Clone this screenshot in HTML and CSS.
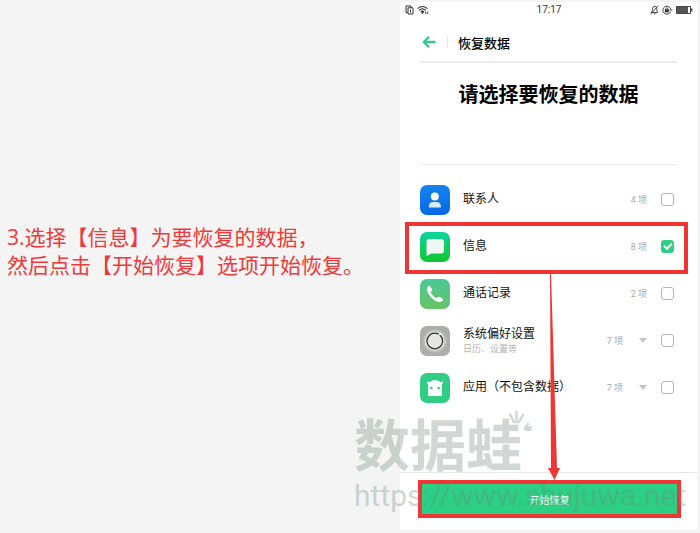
FILE: index.html
```
<!DOCTYPE html>
<html lang="zh-CN">
<head>
    <meta charset="UTF-8">
    <meta name="viewport" content="width=device-width, initial-scale=1.0">
    <title>恢复数据</title>
    <link rel="stylesheet" href="styles.css">
</head>
<body>
    <div class="guide">
        <p class="step">3.选择【信息】为要恢复的数据，<br>然后点击【开始恢复】选项开始恢复。</p>

        <main class="phone">
            <div class="status-bar">
                <div class="status-icons">
                    <svg width="9" height="10" viewBox="0 0 9 10" fill="none" stroke="#333">
                        <path d="M2.5 7.5H1V1h5v1.500M3 2.800h5V9H3z"/>
                        <path d="M5.500 4.500v3"/>
                    </svg>
                    <svg width="13" height="10" viewBox="0 0 13 10" fill="none" stroke="#333">
                        <path d="M.6 3.600Q5.500-.6 10.400 3.600M2.200 5.300Q5.500 2.500 8.800 5.300M3.800 7Q5.500 5.500 7.200 7" stroke-width="1.200"/>
                        <circle cx="5.500" cy="8" r=".9" fill="#333" stroke="none"/>
                        <path d="M8.700 6.500v2.500M10.700 6.500v2.500" stroke-width=".9"/>
                    </svg>
                </div>
                <span class="time">17:17</span>
                <div class="status-icons status-right">
                    <svg width="9" height="10" viewBox="0 0 9 10" fill="none" stroke="#333" stroke-width=".9">
                        <path d="M1.200 7.500h6.500L6.800 5.600V3.200Q6.500 1.300 4.700 1.300T2.600 3.200v2.400zM3.600 8.900h2M8.200.6.600 9.200"/>
                    </svg>
                    <svg width="11" height="10" viewBox="0 0 11 10" fill="none" stroke="#333" stroke-width=".9">
                        <path d="M8.600 6.500A4 4 0 1 1 8.800 4.500M7.500 5h3M3.700 4.500V3.600q1.200-1.800 2.300 0v.9"/>
                        <path d="M2.900 4.300h4v3h-4z" fill="#333" stroke="none"/>
                    </svg>
                    <svg width="17" height="8" viewBox="0 0 17 8">
                        <path d="M.5.500h14v7H.5z" fill="#fff" stroke="#444"/>
                        <path d="M1 1h11v6H1z" fill="#555"/>
                        <path d="M15 2.500h1.500v3H15z" fill="#555"/>
                    </svg>
                </div>
            </div>

            <header class="header">
                <button class="back" type="button" aria-label="返回">
                    <svg width="14" height="12" viewBox="0 0 14 12" fill="none" stroke="#36c68a" stroke-width="2.400" stroke-linecap="round" stroke-linejoin="round">
                        <path d="M12.500 6H2M6.300 1.500 1.700 6l4.600 4.500"/>
                    </svg>
                </button>
                <h1>恢复数据</h1>
            </header>

            <h2 class="title">请选择要恢复的数据</h2>

            <div class="list">
                <label class="row">
                    <svg class="app-icon" viewBox="0 0 30 30">
                        <defs>
                            <linearGradient id="blue" x2="0" y2="1"><stop stop-color="#1684ee"/><stop offset="1" stop-color="#0568e4"/></linearGradient>
                        </defs>
                        <rect width="30" height="30" rx="7" fill="url(#blue)"/>
                        <circle cx="14.800" cy="11.500" r="4" fill="#fff"/>
                        <path d="M8.800 22.500v-1q0-4.500 4.500-4.500h3q4.500 0 4.500 4.500v1z" fill="#dcebfb"/>
                    </svg>
                    <span class="name">联系人</span>
                    <span class="count">4 项</span>
                    <input type="checkbox">
                </label>
                <label class="row highlight">
                    <svg class="app-icon" viewBox="0 0 30 30">
                        <defs>
                            <linearGradient id="green" x2="0" y2="1"><stop stop-color="#0bd5a0"/><stop offset="1" stop-color="#0fc52c"/></linearGradient>
                        </defs>
                        <rect width="30" height="30" rx="7" fill="url(#green)"/>
                        <path d="M9 7h12q3 0 3 3v8.500q0 3-3 3H11.500L6.500 24V10q0-3 2.500-3z" fill="#f2f6f3"/>
                    </svg>
                    <span class="name">信息</span>
                    <span class="count">8 项</span>
                    <input type="checkbox" checked>
                </label>
                <label class="row">
                    <svg class="app-icon" viewBox="0 0 30 30">
                        <defs>
                            <linearGradient id="call" x2="0" y2="1"><stop stop-color="#4bc998"/><stop offset="1" stop-color="#67c465"/></linearGradient>
                        </defs>
                        <rect width="30" height="30" rx="7" fill="url(#call)"/>
                        <path d="M7 8.500Q8 6.500 9.800 6.800 12 9 12 11.300L10.600 13.300Q12.500 17.400 16.600 19.200L18.500 17.700Q21 18 23 20.200 23 22 21 23 16.500 23.700 11.300 18.500 6.300 13.300 7 8.500z" fill="#fff"/>
                    </svg>
                    <span class="name">通话记录</span>
                    <span class="count">2 项</span>
                    <input type="checkbox">
                </label>
                <label class="row">
                    <svg class="app-icon" viewBox="0 0 30 30">
                        <rect width="30" height="30" rx="7" fill="#acaeac"/>
                        <circle cx="14.800" cy="15" r="10.800" fill="none" stroke="#d4d5d4" stroke-width="1.500" stroke-dasharray="1 1"/>
                        <circle cx="14.800" cy="15" r="10" fill="#dededd"/>
                        <circle cx="14.800" cy="15" r="7.800" fill="#e6e6e5" stroke="#333" stroke-width="1.300"/>
                        <path d="M17.500 10 20 6.500l2 2z" fill="#fff"/>
                    </svg>
                    <span class="name">系统偏好设置<small>日历、设置等</small></span>
                    <span class="count">7 项</span>
                    <span class="arrow-down"></span>
                    <input type="checkbox">
                </label>
                <label class="row">
                    <svg class="app-icon" viewBox="0 0 30 30">
                        <rect width="30" height="30" rx="7" fill="#2fce84"/>
                        <path d="M7.200 7.500Q7.500 9.500 9.600 9 14.800 5 20.400 9 22.500 9.500 22.800 7.500 23.500 10.500 21.800 11.500V23H8.200V11.500Q6.500 10.500 7.200 7.500z" fill="#fff"/>
                        <circle cx="11.300" cy="15" r="1.300" fill="#2fce84"/>
                        <circle cx="18.700" cy="15" r="1.300" fill="#2fce84"/>
                    </svg>
                    <span class="name">应用（不包含数据）</span>
                    <span class="count">7 项</span>
                    <span class="arrow-down"></span>
                    <input type="checkbox">
                </label>
            </div>

            <footer class="footer">
                <button class="start" type="button">开始恢复</button>
            </footer>

            <div class="watermark">
                <span class="brand">数据蛙</span>
                <span class="site">https://www.shujuwa.net</span>
                <svg class="crown" width="26" height="24" viewBox="0 0 26 24" fill="none" stroke="#72897c" stroke-width="2.500" stroke-linecap="round">
                    <path d="M2 4.500 6 12h5l4-7M8.500 2v8M17 18l3-4M18 18.500l5-1.500M17.500 19.500l5 .5"/>
                </svg>
            </div>

            <svg class="pointer" width="14" height="207" viewBox="0 0 14 207">
                <path d="M3 0h1L10 195h3L7.500 207 1 195h3z" fill="#f03535"/>
            </svg>
        </main>
    </div>
</body>
</html>
```
FILE: styles.css
```
body {
    margin: 0;
    background: #f4f4f4;
    color: #111;
    font-family: Roboto, 'Noto Sans CJK SC', sans-serif;
}
.guide {
    display: grid;
    grid-template-columns: 400fr 297fr;
    padding: 2px 3px 3px 0;
}
.step {
    align-self: center;
    margin: 0;
    padding: 0 0 30px 7px;
    color: #ee3a3a;
    font-family: 'Open Sans', 'Noto Sans CJK SC', sans-serif;
    font-size: 21px;
    line-height: 28px;
    white-space: nowrap;
}
.phone {
    position: relative;
    background: #fff;
}
.status-bar {
    display: grid;
    grid-template-columns: 1fr auto 1fr;
    align-items: center;
    height: 15px;
    padding: 0 4px 0 5px;
}
.status-icons {
    display: flex;
    align-items: center;
    gap: 3px;
}
.status-right {
    justify-content: flex-end;
}
.time {
    font-size: 10px;
    color: #333;
}
.header {
    display: flex;
    align-items: center;
    gap: 10px;
    height: 38px;
    margin: 0 20px;
    padding-top: 6px;
    border-bottom: 2px solid #ececea;
}
.back {
    display: flex;
    padding: 0 11px 0 2px;
    border: none;
    border-right: 1px solid #e8e8e8;
    background: none;
    cursor: pointer;
}
.header h1 {
    margin: 0;
    color: #000;
    font-size: 13px;
    font-weight: 500;
}
.title {
    height: 102px;
    margin: 0 20px;
    padding-top: 17px;
    box-sizing: border-box;
    border-bottom: 1px solid #e9eeec;
    color: #000;
    font-size: 20px;
    font-weight: bold;
    line-height: 30px;
    text-align: center;
}
.list {
    padding: 11px 0 61px;
}
.row {
    position: relative;
    display: flex;
    align-items: center;
    height: 47px;
    padding: 0 23px 0 20px;
    cursor: pointer;
}
.highlight::after {
    content: '';
    position: absolute;
    inset: -1px 9px -4px 5px;
    border: 4px solid #f03535;
}
.app-icon {
    width: 30px;
    height: 30px;
    margin-right: 13px;
}
.name {
    flex: 1;
    font-size: 12px;
    line-height: 17px;
    white-space: nowrap;
}
.name small {
    display: block;
    color: #b4b4b4;
    font-size: 9px;
    line-height: 13px;
}
.count {
    color: #a8a8a8;
    font-size: 9px;
}
.arrow-down {
    margin-left: 16px;
    border: 4px solid transparent;
    border-top: 5px solid #c4c6c5;
    border-bottom: none;
}
.row input {
    appearance: none;
    box-sizing: border-box;
    width: 13px;
    height: 13px;
    margin: 0 0 0 14px;
    border: 1px solid #b5b5b5;
    border-radius: 3px;
}
.row input:checked {
    position: relative;
    border-color: #2fce84;
    background: #2fce84;
}
.row input:checked::after {
    content: '';
    position: absolute;
    left: 2px;
    top: 2px;
    width: 6px;
    height: 3px;
    border: solid #fff;
    border-width: 0 0 2px 2px;
    transform: rotate(-45deg);
}
.footer {
    padding: 7px 16px 12px 18px;
    border-top: 1px solid #e6e8e7;
}
.start {
    display: block;
    width: 100%;
    height: 38px;
    border: 4px solid #f03535;
    background: #2bd084;
    color: #fff;
    font-family: inherit;
    font-size: 10px;
    cursor: pointer;
}
.watermark {
    position: absolute;
    left: -46px;
    bottom: 16px;
    display: flex;
    flex-direction: column;
    color: #72897c;
    opacity: 0.32;
    pointer-events: none;
}
.brand {
    font-size: 56px;
    font-weight: bold;
    line-height: 62px;
}
.site {
    font-size: 30px;
    line-height: 36px;
}
.crown {
    position: absolute;
    left: 154px;
    top: -6px;
}
.pointer {
    position: absolute;
    right: 136px;
    bottom: 50px;
}
```
